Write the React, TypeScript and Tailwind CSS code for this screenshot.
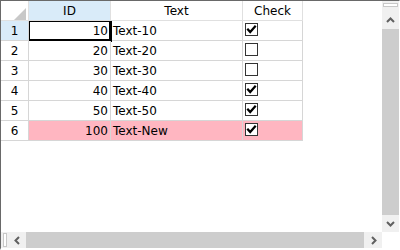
import React from 'react'

interface Row {
  id: number
  text: string
  checked: boolean
  pink?: boolean
}

const rows: Row[] = [
  { id: 10, text: 'Text-10', checked: true },
  { id: 20, text: 'Text-20', checked: false },
  { id: 30, text: 'Text-30', checked: false },
  { id: 40, text: 'Text-40', checked: true },
  { id: 50, text: 'Text-50', checked: true },
  { id: 100, text: 'Text-New', checked: true, pink: true },
]

function CheckBox({ checked }: { checked: boolean }) {
  return (
    <div className="w-[13px] h-[13px] border border-[#333333] bg-white flex items-center justify-center">
      {checked && (
        <svg width="11" height="11" viewBox="0 0 11 11">
          <path d="M2 5.5 L4.2 8 L9 2.5" fill="none" stroke="#000" strokeWidth="2.2" strokeLinecap="square" />
        </svg>
      )}
    </div>
  )
}

function Chevron({ dir }: { dir: 'up' | 'down' | 'left' | 'right' }) {
  const d = {
    up: 'M1 5 L4.5 1.5 L8 5',
    down: 'M1 2 L4.5 5.5 L8 2',
    left: 'M5 1 L1.5 4.5 L5 8',
    right: 'M2 1 L5.5 4.5 L2 8',
  }[dir]
  const w = dir === 'up' || dir === 'down' ? 9 : 7
  const h = dir === 'up' || dir === 'down' ? 7 : 9
  return (
    <svg width={w} height={h} viewBox={`0 0 ${w} ${h}`}>
      <path d={d} fill="none" stroke="#606060" strokeWidth="2" />
    </svg>
  )
}

function VScroll() {
  return (
    <div className="w-[17px] flex flex-col bg-[#f0f0f0]">
      <div className="h-[11px] px-[1px] pt-[2px]">
        <div className="h-[4px] bg-white border border-[#c8c8c8]" />
      </div>
      <div className="h-[17px] flex items-center justify-center">
        <Chevron dir="up" />
      </div>
      <div className="flex-1 bg-[#cdcdcd]" />
      <div className="h-[17px] flex items-center justify-center">
        <Chevron dir="down" />
      </div>
    </div>
  )
}

function HScroll() {
  return (
    <div className="flex-1 flex bg-[#f0f0f0]">
      <div className="w-[7px] py-[1px] pl-[2px]">
        <div className="w-[4px] h-full bg-white border border-[#c8c8c8]" />
      </div>
      <div className="w-[18px] flex items-center justify-center">
        <Chevron dir="left" />
      </div>
      <div className="flex-1 bg-[#cdcdcd]" />
      <div className="w-[18px] flex items-center justify-center">
        <Chevron dir="right" />
      </div>
    </div>
  )
}

export default function App() {
  return (
    <div
      className="w-[400px] h-[250px] flex flex-col bg-white border-l border-t border-r border-b-2 border-l-[#696969] border-t-[#696969] border-r-white border-b-white text-[12px] text-black leading-none"
      style={{ fontFamily: '"DejaVu Sans", sans-serif' }}
    >
      <div className="flex flex-1 min-h-0">
        <div className="flex-1 flex flex-col">
          {/* header */}
          <div className="flex h-[20px]">
            <div className="w-[28px] h-full border-r border-b border-[#e0e0e0] bg-white relative">
              <svg className="absolute left-[13px] top-[7px]" width="12" height="12" viewBox="0 0 12 12">
                <path d="M12 0 L12 12 L0 12 Z" fill="#c8c8c8" />
              </svg>
            </div>
            <div className="w-[82px] h-full border-r border-b border-[#e0e0e0] bg-[#d9ebf9] flex items-center justify-center">
              ID
            </div>
            <div className="w-[132px] h-full border-r border-b border-[#e0e0e0] bg-white flex items-center justify-center">
              Text
            </div>
            <div className="w-[60px] h-full border-r border-b border-[#e0e0e0] bg-white flex items-center justify-center">
              Check
            </div>
          </div>
          {rows.map((r, i) => (
            <div key={r.id} className="flex h-[20px]">
              <div
                className={`w-[28px] h-full border-r border-b border-[#d6d6d6] flex items-center justify-center ${
                  i === 0 ? 'bg-[#d9ebf9]' : 'bg-white'
                }`}
              >
                {i + 1}
              </div>
              <div
                className={`w-[82px] h-full border-r border-b border-[#d6d6d6] flex items-center justify-end pr-[2px] relative ${
                  r.pink ? 'bg-[#ffb6c1]' : 'bg-white'
                }`}
              >
                {r.id}
                {i === 0 && (
                  <div className="absolute left-0 top-0 -right-[2px] -bottom-[2px] border-l border-t border-r-[3px] border-b-[3px] border-black" />
                )}
              </div>
              <div
                className={`w-[132px] h-full border-r border-b border-[#d6d6d6] flex items-center pl-[2px] ${
                  r.pink ? 'bg-[#ffb6c1]' : 'bg-white'
                }`}
              >
                {r.text}
              </div>
              <div
                className={`w-[60px] h-full border-r border-b border-[#d6d6d6] flex items-center pl-[2px] pb-[2px] ${
                  r.pink ? 'bg-[#ffb6c1]' : 'bg-white'
                }`}
              >
                <CheckBox checked={r.checked} />
              </div>
            </div>
          ))}
        </div>
        <VScroll />
      </div>
      <div className="flex h-[16px]">
        <HScroll />
        <div className="w-[17px] bg-white" />
      </div>
    </div>
  )
}
